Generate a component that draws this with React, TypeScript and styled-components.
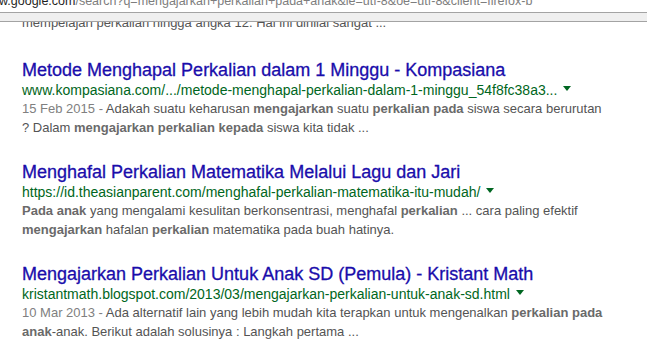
import React from 'react';
import styled, { createGlobalStyle } from 'styled-components';

const GlobalStyle = createGlobalStyle`
  html, body {
    margin: 0;
    padding: 0;
    background: #fff;
  }
  body {
    font-family: "Liberation Sans", Arial, sans-serif;
    width: 647px;
    height: 340px;
    overflow: hidden;
  }
`;

type Piece = { text: string; bold?: boolean };

type Result = {
  title: string;
  url: string;
  date?: string;
  lines: Piece[][];
};

const results: Result[] = [
  {
    title: 'Metode Menghapal Perkalian dalam 1 Minggu - Kompasiana',
    url: 'www.kompasiana.com/.../metode-menghapal-perkalian-dalam-1-minggu_54f8fc38a3...',
    date: '15 Feb 2015',
    lines: [
      [
        { text: 'Adakah suatu keharusan ' },
        { text: 'mengajarkan', bold: true },
        { text: ' suatu ' },
        { text: 'perkalian pada', bold: true },
        { text: ' siswa secara berurutan' },
      ],
      [
        { text: '? Dalam ' },
        { text: 'mengajarkan perkalian kepada', bold: true },
        { text: ' siswa kita tidak ...' },
      ],
    ],
  },
  {
    title: 'Menghafal Perkalian Matematika Melalui Lagu dan Jari',
    url: 'https://id.theasianparent.com/menghafal-perkalian-matematika-itu-mudah/',
    lines: [
      [
        { text: 'Pada anak', bold: true },
        { text: ' yang mengalami kesulitan berkonsentrasi, menghafal ' },
        { text: 'perkalian', bold: true },
        { text: ' ... cara paling efektif' },
      ],
      [
        { text: 'mengajarkan', bold: true },
        { text: ' hafalan ' },
        { text: 'perkalian', bold: true },
        { text: ' matematika pada buah hatinya.' },
      ],
    ],
  },
  {
    title: 'Mengajarkan Perkalian Untuk Anak SD (Pemula) - Kristant Math',
    url: 'kristantmath.blogspot.com/2013/03/mengajarkan-perkalian-untuk-anak-sd.html',
    date: '10 Mar 2013',
    lines: [
      [
        { text: 'Ada alternatif lain yang lebih mudah kita terapkan untuk mengenalkan ' },
        { text: 'perkalian pada', bold: true },
      ],
      [
        { text: 'anak', bold: true },
        { text: '-anak. Berikut adalah solusinya : Langkah pertama ...' },
      ],
    ],
  },
];

const Page = styled.div`
  display: flex;
  flex-direction: column;
`;

// keeps only the bottom strip of a line that is scrolled under the bar
const Clip = styled.div<{ $h: number }>`
  height: ${(p) => p.$h}px;
  overflow: hidden;
  display: flex;
  flex-direction: column;
  justify-content: flex-end;
`;

const AddressLine = styled.div`
  font-size: 12.5px;
  line-height: 16px;
  white-space: nowrap;
  color: #7d7d7d;
  margin-left: -1px;
  flex-shrink: 0;
  b {
    font-weight: normal;
    color: #1e1e1e;
  }
`;

const ToolBar = styled.div`
  margin-top: 3px;
  height: 8px;
  background: #efefef;
  border-top: 1px solid #a3a3a3;
  border-bottom: 1px solid #a3a3a3;
`;

const Results = styled.div`
  display: flex;
  flex-direction: column;
  gap: 24px;
  margin-top: 27px;
  padding-left: 22px;
`;

const CutSnippet = styled.div`
  font-size: 13px;
  line-height: 18.5px;
  color: #545454;
  white-space: nowrap;
  padding-left: 22px;
  flex-shrink: 0;
`;

const Item = styled.div`
  display: flex;
  flex-direction: column;
`;

const Title = styled.a`
  font-size: 18px;
  line-height: 22px;
  color: #1a0dab;
  -webkit-text-stroke: 0.3px #1a0dab;
  text-decoration: none;
  white-space: nowrap;
`;

const UrlRow = styled.div`
  display: flex;
  align-items: center;
  font-size: 14px;
  line-height: 18px;
  color: #006621;
  white-space: nowrap;
`;

const Arrow = styled.span`
  width: 0;
  height: 0;
  margin: -3px 0 0 6px;
  border-style: solid;
  border-width: 5px 4px 0 4px;
  border-color: #006621 transparent transparent transparent;
`;

const Snippet = styled.div`
  margin-top: 1px;
  font-size: 13px;
  line-height: 18.5px;
  color: #545454;
`;

const SnippetLine = styled.div`
  white-space: nowrap;
  b {
    color: #6a6a6a;
  }
`;

const DateText = styled.span`
  color: #808080;
`;

const ResultItem = ({ title, url, date, lines }: Result) => (
  <Item>
    <Title href="#">{title}</Title>
    <UrlRow>
      <span>{url}</span>
      <Arrow />
    </UrlRow>
    <Snippet>
      {lines.map((line, i) => (
        <SnippetLine key={i}>
          {i === 0 && date && <DateText>{date} - </DateText>}
          {line.map((p, j) => (p.bold ? <b key={j}>{p.text}</b> : <span key={j}>{p.text}</span>))}
        </SnippetLine>
      ))}
    </Snippet>
  </Item>
);

export default function App() {
  return (
    <Page>
      <GlobalStyle />
      <Clip $h={9}>
        <AddressLine>
          <b>w.google.com</b>/search?q=mengajarkan+perkalian+pada+anak&amp;ie=utf-8&amp;oe=utf-8&amp;client=firefox-b
        </AddressLine>
      </Clip>
      <ToolBar />
      <Clip $h={10}>
        <CutSnippet>mempelajari perkalian hingga angka 12. Hal ini dinilai sangat ...</CutSnippet>
      </Clip>
      <Results>
        {results.map((r) => (
          <ResultItem key={r.url} {...r} />
        ))}
      </Results>
    </Page>
  );
}
